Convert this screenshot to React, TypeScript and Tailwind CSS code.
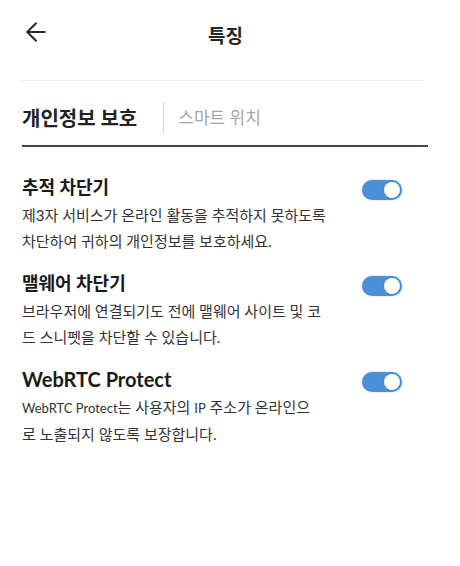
import React from "react";
import { ArrowLeft } from "lucide-react";

const Latin: React.FC<{ children: React.ReactNode }> = ({ children }) => (
  <span className="text-[13px]">{children}</span>
);

const features = [
  {
    id: "tracker",
    title: "추적 차단기",
    titleSize: "text-[18px]",
    lines: [
      <>제3자 서비스가 온라인 활동을 추적하지 못하도록</>,
      <>차단하여 귀하의 개인정보를 보호하세요.</>,
    ],
  },
  {
    id: "malware",
    title: "맬웨어 차단기",
    titleSize: "text-[18px]",
    lines: [
      <>브라우저에 연결되기도 전에 맬웨어 사이트 및 코</>,
      <>드 스니펫을 차단할 수 있습니다.</>,
    ],
  },
  {
    id: "webrtc",
    title: "WebRTC Protect",
    titleSize: "text-[20px]",
    lines: [
      <>
        <Latin>WebRTC Protect</Latin>는 사용자의 <Latin>IP</Latin> 주소가 온라인으
      </>,
      <>로 노출되지 않도록 보장합니다.</>,
    ],
  },
];

const Toggle: React.FC = () => (
  <div className="flex items-center justify-end w-10 h-5 rounded-full bg-[#4a90d6] px-[2px] shadow-[0_0_2px_rgba(74,144,214,0.5)]">
    <div className="w-4 h-4 rounded-full bg-white shadow-[0_0_0_1px_rgba(60,120,190,0.35)]" />
  </div>
);

export default function App() {
  return (
    <div
      className="w-[460px] h-[566px] bg-white text-[#1c1c1c] overflow-hidden"
      style={{ fontFamily: "Lato, 'Noto Sans CJK KR', sans-serif" }}
    >
      {/* Header */}
      <div className="relative flex items-start justify-center h-[80px] pt-[24px]">
        <ArrowLeft className="absolute left-[21px] top-[17px] w-[30px] h-[30px] text-[#2a2a2a]" strokeWidth={1.6} />
        <h1 className="text-[19px] leading-6 font-bold text-[#262626] mr-[9px]">특징</h1>
      </div>
      <div className="mx-5 w-[405px] h-px bg-[#eef2f5]" />

      {/* Tabs */}
      <div className="ml-[22px] w-[406px]">
        <div className="flex items-center h-[64px] pt-[10px]">
          <span className="text-[20px] font-bold text-[#222]">개인정보 보호</span>
          <span className="ml-[26px] mr-[14px] w-px h-8 bg-[#d4d4d4]" />
          <span className="text-[17px] text-[#a6a6a6]">스마트 위치</span>
        </div>
        <div className="h-[2px] bg-[#3b4a5a]" />
      </div>

      {/* Features */}
      <div className="flex flex-col gap-[17px] pt-[28px] pl-[22px] pr-[58px]">
        {features.map((f) => (
          <div key={f.id} className="flex justify-between">
            <div>
              <h3 className={`${f.titleSize} font-bold leading-6 text-[#1a1a1a]`}>{f.title}</h3>
              <p className="mt-[3px] text-[15px] leading-[26px] text-[#333]">
                {f.lines.map((l, i) => (
                  <span key={i} className="block whitespace-nowrap">
                    {l}
                  </span>
                ))}
              </p>
            </div>
            <div className="mt-[5px]">
              <Toggle />
            </div>
          </div>
        ))}
      </div>
    </div>
  );
}
